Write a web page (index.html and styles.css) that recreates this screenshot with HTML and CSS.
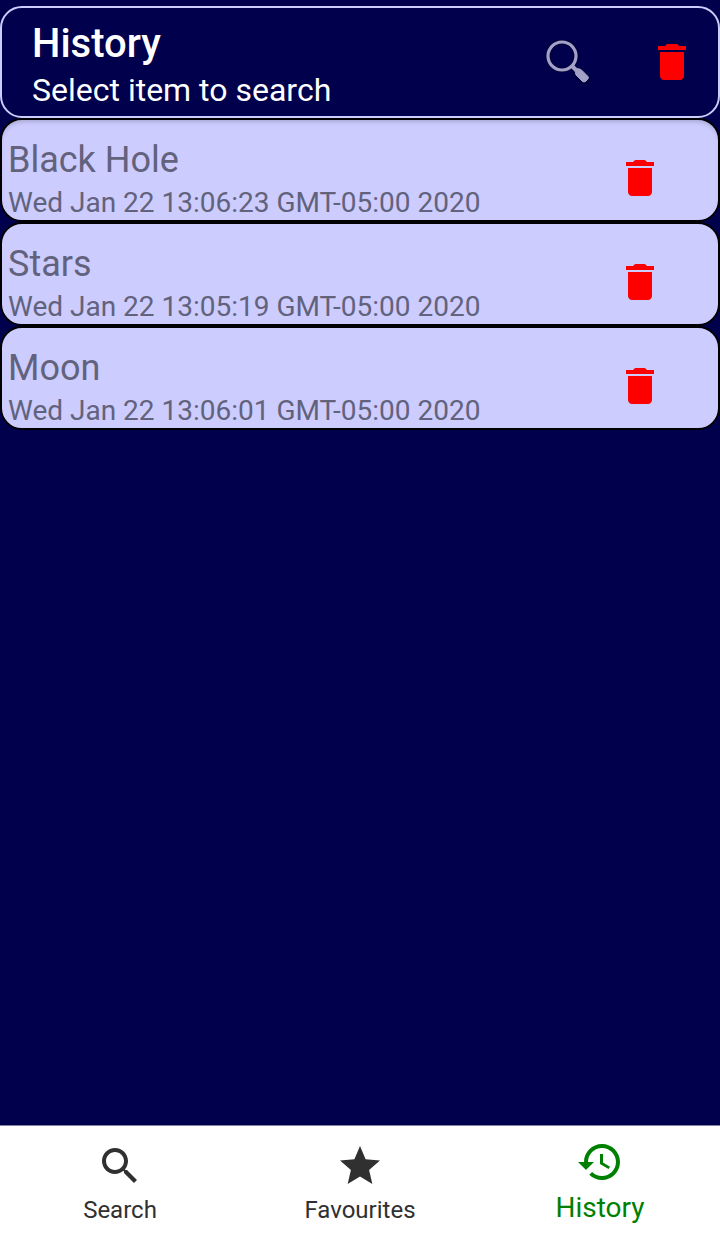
FILE: index.html
```html
<!DOCTYPE html>
<html lang="en">
<head>
<meta charset="utf-8">
<meta name="viewport" content="width=device-width, initial-scale=1">
<title>History</title>
<link rel="stylesheet" href="styles.css">
</head>
<body>
<svg class="sprite" aria-hidden="true">
  <symbol id="trash" viewBox="0 0 24 24"><path d="M6 19c0 1.100.9 2 2 2h8c1.100 0 2-.9 2-2V7H6v12zM19 4h-3.500l-1-1h-5l-1 1H5v2h14V4z"/></symbol>
</svg>
<header class="header">
  <div class="heading">
    <h1 class="title">History</h1>
    <p class="subtitle">Select item to search</p>
  </div>
  <button class="icon-button" aria-label="Search history">
    <svg class="icon" viewBox="0 0 48 48">
      <g fill="none" stroke="#000033" stroke-width="5"><circle cx="18" cy="18" r="14"/><path d="M28 28l4 4"/><path d="M34 34l7 7" stroke-width="10" stroke-linecap="round"/></g>
      <g fill="none" stroke="#a3a1c8"><circle cx="18" cy="18" r="14" stroke-width="3.200"/><path d="M27 27l5 5" stroke-width="4"/><path d="M31 33l2.500-2.500 3.500 1L44 38.500q1 1.500-.5 3l-2 2q-1.500 1-3 0L32 37z" fill="#a3a1c8"/></g>
    </svg>
  </button>
  <button class="icon-button" aria-label="Delete all"><svg class="icon"><use href="#trash"/></svg></button>
</header>
<main class="main">
  <ul class="list">
    <li class="item">
      <div class="entry"><h2 class="term">Black Hole</h2><p class="date">Wed Jan 22 13:06:23 GMT-05:00 2020</p></div>
      <button class="icon-button" aria-label="Delete Black Hole"><svg class="icon"><use href="#trash"/></svg></button>
    </li>
    <li class="item">
      <div class="entry"><h2 class="term">Stars</h2><p class="date">Wed Jan 22 13:05:19 GMT-05:00 2020</p></div>
      <button class="icon-button" aria-label="Delete Stars"><svg class="icon"><use href="#trash"/></svg></button>
    </li>
    <li class="item">
      <div class="entry"><h2 class="term">Moon</h2><p class="date">Wed Jan 22 13:06:01 GMT-05:00 2020</p></div>
      <button class="icon-button" aria-label="Delete Moon"><svg class="icon"><use href="#trash"/></svg></button>
    </li>
  </ul>
</main>
<nav class="nav">
  <a class="tab" href="#search">
    <svg class="icon" viewBox="0 0 24 24"><path d="M15.500 14h-.79l-.28-.27C15.410 12.590 16 11.110 16 9.500 16 5.910 13.090 3 9.500 3S3 5.910 3 9.500 5.910 16 9.500 16c1.610 0 3.090-.59 4.230-1.570l.27.28v.79l5 4.990L20.490 19l-4.990-5zm-6 0C7.010 14 5 11.990 5 9.500S7.010 5 9.500 5 14 7.010 14 9.500 11.990 14 9.500 14z"/></svg>
    Search
  </a>
  <a class="tab" href="#favourites">
    <svg class="icon" viewBox="0 0 24 24"><path d="M12 17.270L18.180 21l-1.640-7.030L22 9.240l-7.190-.61L12 2 9.190 8.630 2 9.240l5.460 4.730L5.820 21z"/></svg>
    Favourites
  </a>
  <a class="tab active" href="#history" aria-current="page">
    <svg class="icon" viewBox="0 0 24 24"><path d="M13 3c-4.970 0-9 4.030-9 9H1l3.890 3.890.07.14L9 12H6c0-3.870 3.130-7 7-7s7 3.130 7 7-3.130 7-7 7c-1.930 0-3.680-.79-4.940-2.060l-1.420 1.420C8.270 19.990 10.510 21 13 21c4.970 0 9-4.030 9-9s-4.030-9-9-9zm-1 5v5l4.280 2.540.72-1.210-3.500-2.080V8H12z"/></svg>
    History
  </a>
</nav>
</body>
</html>
```
FILE: styles.css
```css
* {
  box-sizing: border-box;
}

body {
  display: flex;
  flex-direction: column;
  min-height: 100vh;
  margin: 0;
  padding-top: 6px;
  background: #00004c;
  font-family: Roboto, "Liberation Sans", sans-serif;
}

h1, h2, p, ul {
  margin: 0;
  padding: 0;
}

.sprite {
  position: absolute;
  width: 0;
  height: 0;
}

.icon {
  display: block;
  width: 48px;
  height: 48px;
  fill: currentColor;
}

.icon-button {
  padding: 0;
  border: 0;
  background: none;
  color: #ff0000;
}

.header {
  display: flex;
  align-items: center;
  gap: 56px;
  padding: 0 22px 0 30px;
  border: 2px solid #ccccff;
  border-radius: 22px;
  color: #ffffff;
}

.heading {
  flex: 1;
  padding: 12px 0 6px;
}

.title {
  font-size: 40px;
  line-height: 48px;
  font-weight: 500;
}

.subtitle {
  margin-top: 2px;
  font-size: 32px;
  line-height: 40px;
}

.main {
  flex: 1;
}

.list {
  list-style: none;
}

.item {
  display: flex;
  align-items: center;
  padding: 16px 54px 0 6px;
  border: 2px solid #000000;
  border-radius: 22px;
  background: #ccccff;
  color: #62627c;
}

.item:first-child {
  box-shadow: inset 0 4px 4px -2px #a8a8d4;
}

.entry {
  flex: 1;
}

.term {
  font-size: 36px;
  line-height: 48px;
  font-weight: 400;
}

.date {
  padding-top: 2px;
  font-size: 28px;
  line-height: 34px;
}

.nav {
  display: flex;
  min-height: 113px;
  border-top: 1px solid #8080a6;
  background: #ffffff;
}

.tab {
  flex: 1;
  display: flex;
  flex-direction: column;
  align-items: center;
  gap: 4px;
  padding-top: 16px;
  color: #303030;
  font-size: 24px;
  line-height: 32px;
  text-decoration: none;
}

.tab.active {
  gap: 6px;
  padding-top: 12px;
  color: #008000;
  font-size: 28px;
}
```
